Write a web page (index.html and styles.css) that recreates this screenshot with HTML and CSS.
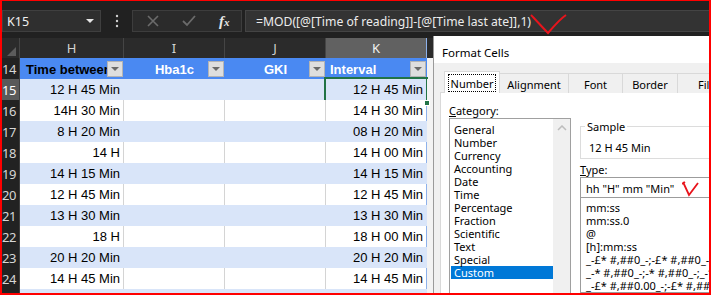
FILE: index.html
```html
<!doctype html>
<html>
  <head>
    <meta charset="utf-8" />
    <link rel="stylesheet" href="styles.css">
  </head>
  <body>
    <div class="frame">
      <div class="formula-bar">
        <div class="name-box">
          <span>K15</span>
          <span class="caret"></span>
        </div>
        <svg class="dots" width="4" height="14" viewBox="0 0 4 14">
          <circle cx="2" cy="2" r="1.2" fill="#cfcfcf" />
          <circle cx="2" cy="7" r="1.2" fill="#cfcfcf" />
          <circle cx="2" cy="12" r="1.2" fill="#cfcfcf" />
        </svg>
        <div class="fx-buttons">
          <svg width="12" height="12" viewBox="0 0 12 12">
            <path d="M1 1 L11 11 M11 1 L1 11" stroke="#6b6b6b" stroke-width="1.6" fill="none" />
          </svg>
          <svg width="14" height="12" viewBox="0 0 14 12">
            <path d="M1 6 L5 10 L13 1" stroke="#6b6b6b" stroke-width="1.8" fill="none" />
          </svg>
          <span class="fx">f<small>x</small></span>
        </div>
        <div class="formula-input">
          <span>=MOD([@[Time of reading]]-[@[Time last ate]],1)</span>
          <svg class="tick" width="38" height="22" viewBox="0 0 38 22">
            <path d="M1 2 C5 6 12 14 18 20 C24 13 30 6 36 2" stroke="#e8141c" stroke-width="2" fill="none" />
          </svg>
        </div>
      </div>

      <div class="sheet">
        <div class="row col-heads">
          <div class="corner"><span></span></div>
          <div>H</div>
          <div>I</div>
          <div>J</div>
          <div class="current">K</div>
          <div></div>
        </div>

        <div class="row table-head">
          <div class="rh">14</div>
          <div class="th dark-text">Time between<span class="filter"></span></div>
          <div class="th center">Hba1c<span class="filter"></span></div>
          <div class="th center">GKI<span class="filter"></span></div>
          <div class="th">Interval<span class="filter"></span></div>
          <div class="rest"></div>
        </div>

        <div class="row band">
          <div class="rh current">15</div>
          <div class="num">12 H 45 Min</div>
          <div></div>
          <div></div>
          <div class="num selected">12 H 45 Min<span class="handle"></span></div>
          <div class="rest"></div>
        </div>
        <div class="row">
          <div class="rh">16</div>
          <div class="num">14H 30 Min</div>
          <div></div>
          <div></div>
          <div class="num">14 H 30 Min</div>
          <div class="rest"></div>
        </div>
        <div class="row band">
          <div class="rh">17</div>
          <div class="num">8 H 20 Min</div>
          <div></div>
          <div></div>
          <div class="num">08 H 20 Min</div>
          <div class="rest"></div>
        </div>
        <div class="row">
          <div class="rh">18</div>
          <div class="num">14 H</div>
          <div></div>
          <div></div>
          <div class="num">14 H 00 Min</div>
          <div class="rest"></div>
        </div>
        <div class="row band">
          <div class="rh">19</div>
          <div class="num">14 H 15 Min</div>
          <div></div>
          <div></div>
          <div class="num">14 H 15 Min</div>
          <div class="rest"></div>
        </div>
        <div class="row">
          <div class="rh">20</div>
          <div class="num">12 H 45 Min</div>
          <div></div>
          <div></div>
          <div class="num">12 H 45 Min</div>
          <div class="rest"></div>
        </div>
        <div class="row band">
          <div class="rh">21</div>
          <div class="num">13 H 30 Min</div>
          <div></div>
          <div></div>
          <div class="num">13 H 30 Min</div>
          <div class="rest"></div>
        </div>
        <div class="row">
          <div class="rh">22</div>
          <div class="num">18 H</div>
          <div></div>
          <div></div>
          <div class="num">18 H 00 Min</div>
          <div class="rest"></div>
        </div>
        <div class="row band">
          <div class="rh">23</div>
          <div class="num">20 H 20 Min</div>
          <div></div>
          <div></div>
          <div class="num">20 H 20 Min</div>
          <div class="rest"></div>
        </div>
        <div class="row">
          <div class="rh">24</div>
          <div class="num">14 H 45 Min</div>
          <div></div>
          <div></div>
          <div class="num">14 H 45 Min</div>
          <div class="rest"></div>
        </div>
        <div class="row band">
          <div class="rh"></div>
          <div class="num"></div>
          <div></div>
          <div></div>
          <div class="num"></div>
          <div class="rest"></div>
        </div>
      </div>

      <div class="dialog">
        <div class="dialog-title">Format Cells</div>
        <div class="dialog-body">
          <div class="tabs">
            <div class="tab active"><span>Number</span></div>
            <div class="tab tab-align">Alignment</div>
            <div class="tab tab-font">Font</div>
            <div class="tab tab-border">Border</div>
            <div class="tab tab-fill">Fill</div>
          </div>
          <div class="panel">
            <div class="category">
              <div class="label"><u>C</u>ategory:</div>
              <div class="list">
                <div class="list-items">
                  <div>General</div>
                  <div>Number</div>
                  <div>Currency</div>
                  <div>Accounting</div>
                  <div>Date</div>
                  <div>Time</div>
                  <div>Percentage</div>
                  <div>Fraction</div>
                  <div>Scientific</div>
                  <div>Text</div>
                  <div>Special</div>
                  <div class="chosen">Custom</div>
                </div>
                <div class="scroll">
                  <svg width="10" height="6" viewBox="0 0 10 6">
                    <path d="M1 5 L5 1 L9 5" stroke="#bdbdbd" stroke-width="1.5" fill="none" />
                  </svg>
                </div>
              </div>
            </div>
            <div class="details">
              <div class="sample">
                <div class="legend">Sample</div>
                <div class="sample-value">12 H 45 Min</div>
              </div>
              <div class="label"><u>T</u>ype:</div>
              <div class="type-input">
                hh "H" mm "Min"
                <svg class="tick-small" width="18" height="16" viewBox="0 0 18 16">
                  <path d="M1 1 L7 14 L16 2 M0 3 L3 1" stroke="#e8141c" stroke-width="1.8" fill="none" />
                </svg>
              </div>
              <div class="type-list">
                <div>mm:ss</div>
                <div>mm:ss.0</div>
                <div>@</div>
                <div>[h]:mm:ss</div>
                <div>_-£* #,##0_-;-£* #,##0_-;_-£* "-"_-;_-@_-</div>
                <div>_-* #,##0_-;-* #,##0_-;_-* "-"_-;_-@_-</div>
                <div>_-£* #,##0.00_-;-£* #,##0.00_-;_-£* "-"??_-;_-@_-</div>
              </div>
            </div>
          </div>
        </div>
      </div>
    </div>
  </body>
</html>
```

FILE: styles.css
```css
* {
  margin: 0;
  padding: 0;
  box-sizing: border-box;
}

body {
  width: 711px;
  height: 295px;
  overflow: hidden;
  background: #212121;
  font-family: 'Noto Sans', 'Liberation Sans', sans-serif;
}

.frame {
  position: relative;
  width: 711px;
  height: 295px;
  border-style: solid;
  border-color: #ff0000;
  border-width: 1px 2px 2px 2px;
  background: #212121;
  overflow: hidden;
}

/* formula bar */

.formula-bar {
  height: 37px;
  display: flex;
  align-items: flex-start;
  padding-top: 9px;
}

.name-box {
  width: 99px;
  height: 22px;
  background: #2f2f2f;
  border: 1px solid #3f3f3f;
  display: flex;
  align-items: center;
  justify-content: space-between;
  padding: 0 6px 0 4px;
  color: #f0f0f0;
  font-size: 12.5px;
}

.caret {
  width: 0;
  height: 0;
  border-left: 4px solid transparent;
  border-right: 4px solid transparent;
  border-top: 4px solid #e6e6e6;
}

.dots {
  margin: 4px 13px 0 14px;
}

.fx-buttons {
  width: 110px;
  height: 22px;
  background: #2b2b2b;
  border: 1px solid #3d3d3d;
  display: flex;
  align-items: center;
  padding-left: 14px;
  gap: 23px;
}

.fx {
  color: #e6e6e6;
  font-family: 'Liberation Serif', serif;
  font-style: italic;
  font-weight: bold;
  font-size: 15px;
}

.fx small {
  font-size: 11px;
}

.formula-input {
  flex: 1;
  margin-left: 3px;
  height: 22px;
  background: #333333;
  border: 1px solid #444444;
  border-right: none;
  display: flex;
  align-items: center;
  padding-left: 10px;
  color: #ececec;
  font-size: 12.2px;
  position: relative;
}

.tick {
  position: absolute;
  left: 284px;
  top: 2px;
}

/* sheet */

.sheet {
  font-family: 'Liberation Sans', Arial, sans-serif;
  font-size: 13px;
}

.row {
  display: grid;
  grid-template-columns: 18px 104px 101px 101px 101px 1fr;
  height: 21px;
}

.row > div {
  border-bottom: 1px solid #d4d4d4;
  border-right: 1px solid #d4d4d4;
  background: #ffffff;
  position: relative;
}

.col-heads {
  height: 20px;
}

.col-heads > div {
  background: #2b2b2b;
  border-right: 1px solid #454545;
  border-bottom: 1px solid #454545;
  color: #d2d2d2;
  font-family: 'Noto Sans', sans-serif;
  font-size: 13px;
  text-align: center;
  line-height: 21px;
}

.col-heads > div.current {
  background: #616161;
  color: #f2f2f2;
  border-bottom: 1px solid #8a8a8a;
}

.col-heads .corner span {
  position: absolute;
  right: 3px;
  bottom: 3px;
  width: 0;
  height: 0;
  border-left: 9px solid transparent;
  border-bottom: 9px solid #5c5c5c;
}

.row > .rh {
  background: #222222;
  border-right: 1px solid #3e3e3e;
  border-bottom: 1px solid #3e3e3e;
  color: #d6d6d6;
  font-family: 'Noto Sans', sans-serif;
  font-size: 13px;
  line-height: 23px;
  letter-spacing: -0.5px;
}

.row > .rh.current {
  background: #5a5a5a;
  color: #ffffff;
}

.row > .th {
  background: #4a89f2;
  border-right: none;
  border-bottom: 1px solid #4a89f2;
  color: #ffffff;
  font-weight: bold;
  line-height: 23px;
  padding-left: 4px;
  white-space: nowrap;
  overflow: hidden;
}

.row > .th:nth-child(2) {
  padding-left: 6px;
}

.row > .th.dark-text {
  color: #000000;
}

.row > .th.center {
  text-align: center;
  padding-left: 0;
}

.filter {
  position: absolute;
  right: 1px;
  top: 3px;
  width: 16px;
  height: 16px;
  background: #dedede;
  border: 1px solid #b4b4b4;
}

.filter::after {
  content: '';
  position: absolute;
  left: 3px;
  top: 5px;
  border-left: 4px solid transparent;
  border-right: 4px solid transparent;
  border-top: 4px solid #6a6a6a;
}

.row > .num {
  text-align: right;
  padding-right: 3px;
  line-height: 22px;
  color: #000000;
}

.row > div:nth-child(5) {
  border-right-color: #8db1eb;
}

.row:not(.col-heads) > div:not(.rh):not(.rest) {
  border-bottom-color: #8db1eb;
}

.band > div:not(.rh):not(.rest) {
  background: #d9e5f9;
  border-right-color: #d9e5f9;
}

.band > div:nth-child(5) {
  border-right-color: #8db1eb;
}

.row > .rest {
  background: #f3f3f3;
  border-bottom-color: #dcdcdc;
}

.selected::after {
  content: '';
  position: absolute;
  left: -2px;
  top: -2px;
  right: -2px;
  bottom: -2px;
  border: 2px solid #217346;
}

.handle {
  position: absolute;
  right: -4px;
  bottom: -4px;
  width: 6px;
  height: 6px;
  background: #217346;
  border: 1px solid #ffffff;
  z-index: 2;
}

/* dialog */

.dialog {
  position: absolute;
  left: 431px;
  top: 35px;
  right: 0;
  bottom: 0;
  background: #f0f0f0;
  border-left: 1px solid #9a9a9a;
  display: flex;
  flex-direction: column;
  font-family: 'Noto Sans', sans-serif;
  font-size: 11px;
  color: #000000;
}

.dialog-title {
  height: 30px;
  background: #ffffff;
  padding: 9px 0 0 8px;
  font-size: 11.5px;
}

.dialog-body {
  flex: 1;
  padding: 8px 0 0 6px;
  display: flex;
  flex-direction: column;
}

.tabs {
  display: flex;
  align-items: flex-end;
  padding-left: 4px;
  height: 22px;
  position: relative;
  z-index: 1;
  white-space: nowrap;
  overflow: hidden;
  flex-shrink: 0;
}

.tab {
  flex-shrink: 0;
  height: 20px;
  border: 1px solid #d9d9d9;
  border-bottom: none;
  border-left: none;
  background: #f0f0f0;
  text-align: center;
  line-height: 17px;
  padding-top: 2px;
}

.tab.active {
  position: relative;
  z-index: 2;
  height: 22px;
  width: 56px;
  background: #ffffff;
  border-left: 1px solid #d9d9d9;
  padding-top: 2px;
}

.tab.active span {
  display: inline-block;
  border: 1px dotted #000000;
  padding: 2px 2px 0;
  line-height: 14px;
}

.tab-align {
  width: 69px;
}

.tab-font {
  width: 54px;
}

.tab-border {
  width: 55px;
}

.tab-fill {
  width: 60px;
  text-align: left;
  padding-left: 20px;
}

.panel {
  flex: 1;
  background: #ffffff;
  border: 1px solid #d9d9d9;
  border-right: none;
  border-bottom: none;
  margin-top: -1px;
  display: flex;
  padding-left: 8px;
  gap: 9px;
  overflow: hidden;
}

.label {
  height: 25px;
  line-height: 18px;
  padding-top: 9px;
}

.category {
  width: 122px;
  flex-shrink: 0;
  display: flex;
  flex-direction: column;
}

.list {
  flex: 1;
  border: 1px solid #a0a0a0;
  border-bottom: none;
  display: flex;
}

.list-items {
  flex: 1;
  padding: 4px 0 0 1px;
}

.list-items div {
  height: 13px;
  line-height: 14px;
  padding-left: 3px;
}

.list-items .chosen {
  background: #0078d7;
  color: #ffffff;
}

.scroll {
  width: 17px;
  background: #f0f0f0;
  display: flex;
  justify-content: center;
  padding-top: 6px;
}

.details {
  flex: 1;
  min-width: 0;
  display: flex;
  flex-direction: column;
  padding-top: 33px;
  white-space: nowrap;
}

.sample {
  position: relative;
  height: 33px;
  flex-shrink: 0;
  border: 1px solid #dcdcdc;
  border-right: none;
  padding: 14px 0 0 8px;
}

.legend {
  position: absolute;
  left: 4px;
  top: -6px;
  padding: 0 2px;
  background: #ffffff;
  line-height: 12px;
}

.sample-value {
  line-height: 14px;
}

.details > .label {
  height: 18px;
  line-height: 18px;
  padding-top: 2px;
  flex-shrink: 0;
}

.type-input {
  height: 21px;
  flex-shrink: 0;
  border: 1px solid #9c9c9c;
  border-right: none;
  padding: 2px 0 0 5px;
  line-height: 17px;
  position: relative;
}

.tick-small {
  position: absolute;
  left: 101px;
  top: 3px;
}

.type-list {
  flex: 1;
  border: 1px solid #9c9c9c;
  border-top: none;
  border-right: none;
  padding: 3px 0 0 5px;
}

.type-list div {
  height: 13px;
  line-height: 14px;
}
```
